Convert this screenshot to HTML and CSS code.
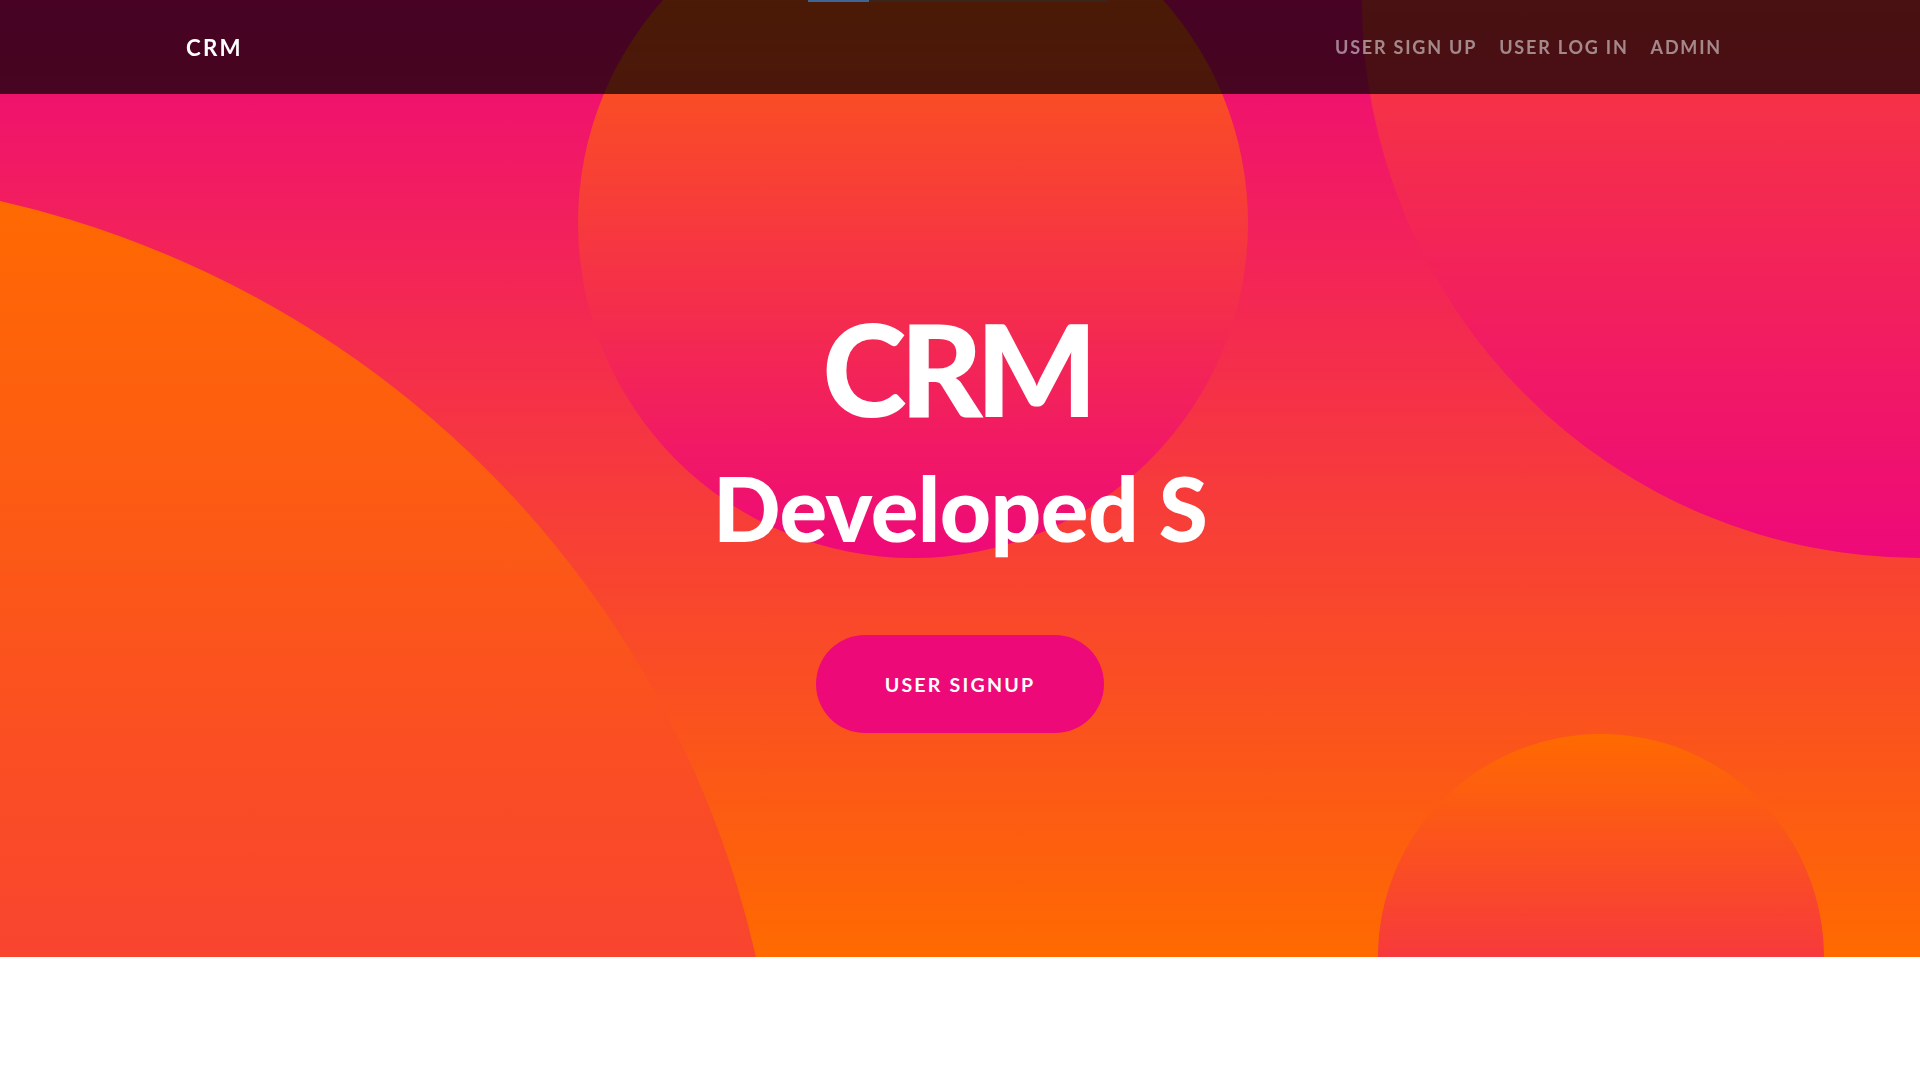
FILE: index.html
```html
<!DOCTYPE html>
<html lang="en">
<head>
<meta charset="utf-8">
<title>CRM</title>
<link rel="stylesheet" href="styles.css">
</head>
<body>
<div class="top-strip"><span class="strip-blue"></span><span class="strip-dark"></span></div>
<nav class="navbar">
  <div class="nav-inner">
    <a class="brand" href="#">CRM</a>
    <ul class="nav-links">
      <li><a href="#">User Sign Up</a></li>
      <li><a href="#">User Log In</a></li>
      <li><a href="#">Admin</a></li>
    </ul>
  </div>
</nav>
<header class="masthead">
  <div class="masthead-content">
    <h1 class="masthead-heading">CRM</h1>
    <h2 class="masthead-subheading">Developed S</h2>
    <a class="btn-signup" href="#">User Signup</a>
  </div>
  <div class="bg-circle bg-circle-1"></div>
  <div class="bg-circle bg-circle-2"></div>
  <div class="bg-circle bg-circle-3"></div>
  <div class="bg-circle bg-circle-4"></div>
</header>
<section class="below"></section>
</body>
</html>
```
FILE: styles.css
```css
html, body {
  margin: 0;
  padding: 0;
}
body {
  font-family: "Lato", "Liberation Sans", sans-serif;
  background: #ffffff;
  overflow: hidden;
}
a { text-decoration: none; }

.navbar {
  position: fixed;
  top: 0;
  left: 0;
  right: 0;
  z-index: 10;
  height: 94px;
  background-color: rgba(0, 0, 0, 0.7);
}
.nav-inner {
  height: 100%;
  display: flex;
  align-items: center;
  justify-content: space-between;
  padding: 0 187px 0 186px;
}
.brand {
  color: #ffffff;
  font-size: 22.3px;
  font-weight: 700;
  letter-spacing: 2.2px;
  text-transform: uppercase;
}
.nav-links {
  list-style: none;
  margin: 0;
  padding: 0;
  display: flex;
}
.nav-links a {
  display: block;
  padding: 0 11px;
  color: rgba(255, 255, 255, 0.5);
  font-size: 18px;
  font-weight: 700;
  letter-spacing: 1.8px;
  text-transform: uppercase;
}

.top-strip {
  position: fixed;
  top: 0;
  left: 808px;
  z-index: 20;
  display: flex;
  height: 2px;
}
.strip-blue { width: 61px; background: #3f6594; }
.strip-dark { width: 239px; background: #2e2a28; opacity: 0.6; }

.masthead {
  position: relative;
  overflow: hidden;
  height: 957px;
  box-sizing: border-box;
  padding-top: 290px;
  background: linear-gradient(0deg, #ff6a00 0%, #ee0979 100%);
}
.masthead-content {
  position: relative;
  z-index: 1;
  text-align: center;
  display: flex;
  flex-direction: column;
  align-items: center;
}
.masthead-heading {
  margin: 0;
  color: #ffffff;
  font-size: 128px;
  font-weight: 900;
  line-height: 156px;
  letter-spacing: -7px;
  text-indent: -7px;
}
.masthead-subheading {
  margin: 8px 0 0;
  color: #ffffff;
  font-size: 89px;
  font-weight: 900;
  line-height: 107px;
  letter-spacing: -0.6px;
}
.btn-signup {
  margin-top: 74px;
  display: flex;
  align-items: center;
  justify-content: center;
  width: 288px;
  height: 98px;
  box-sizing: border-box;
  border-radius: 49px;
  background: #ee0979;
  color: #ffffff;
  font-size: 19.6px;
  font-weight: 700;
  letter-spacing: 2.2px;
  text-transform: uppercase;
}

.bg-circle {
  position: absolute;
  z-index: 0;
  border-radius: 100%;
  background: linear-gradient(0deg, #ee0979 0%, #ff6a00 100%);
}
.bg-circle-1 {
  width: 2007px;
  height: 2007px;
  bottom: -1226px;
  left: -1226px;
}
.bg-circle-2 {
  width: 1115px;
  height: 1115px;
  top: -557px;
  right: -557px;
}
.bg-circle-3 {
  width: 446px;
  height: 446px;
  bottom: -223px;
  right: 5%;
}
.bg-circle-4 {
  width: 670px;
  height: 670px;
  top: -112px;
  right: 35%;
}
.below {
  height: 123px;
  background: #ffffff;
}
```
